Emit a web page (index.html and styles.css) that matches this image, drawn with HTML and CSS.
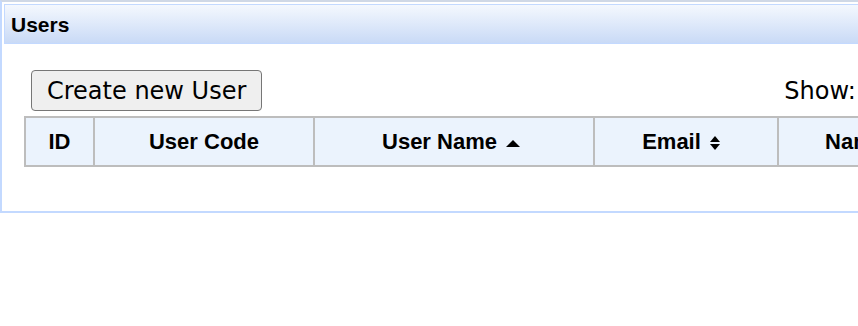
FILE: index.html
```html
<!DOCTYPE html>
<html>
<head>
<meta charset="utf-8">
<link rel="stylesheet" href="styles.css">
</head>
<body>
<div class="panel">
  <div class="panel-head">Users</div>
  <div class="panel-body">
    <div class="toolbar">
      <button class="btn">Create new User</button>
      <span class="show">Show:</span>
    </div>
    <table class="grid">
      <thead>
        <tr>
          <th class="c-id">ID</th>
          <th class="c-code">User Code</th>
          <th class="c-name">User Name<span class="sort"><span class="up big"></span></span></th>
          <th class="c-email">Email<span class="sort"><span class="both"><span class="up"></span><span class="down"></span></span></span></th>
          <th class="c-full">Name</th>
        </tr>
      </thead>
    </table>
  </div>
</div>
</body>
</html>
```
FILE: styles.css
```css
html, body {
  margin: 0;
  padding: 0;
  background: #fff;
  width: 858px;
  overflow: hidden;
}
.panel {
  width: 1000px;
  border: 2px solid #c3d9ff;
  border-top-color: #cfd8e6;
  padding: 2px;
  height: 205px;
  box-sizing: content-box;
}
.panel-head {
  height: 38px;
  border: 1px solid #c3d9ff;
  background: linear-gradient(#f4f8fe, #c9daf6);
  font-family: "Liberation Sans", Arial, sans-serif;
  font-weight: bold;
  font-size: 21px;
  line-height: 39px;
  padding-left: 6px;
  color: #000;
}
.panel-body {
  padding: 26px 0 0 20px;
}
.toolbar {
  display: flex;
  align-items: center;
  height: 41px;
  padding-left: 7px;
}
.btn {
  font-family: "DejaVu Sans", Verdana, sans-serif;
  font-size: 24px;
  height: 41px;
  padding: 0 15px 0 15px;
  background: #efefef;
  border: 1px solid #767676;
  border-radius: 4px;
  color: #000;
  line-height: 1;
}
.show {
  font-family: "DejaVu Sans", Verdana, sans-serif;
  font-size: 24px;
  white-space: nowrap;
  margin-left: 522px;
  margin-top: 1px;
}
.grid {
  margin-top: 5px;
  border-collapse: collapse;
  border: 2px solid #bdbdbd;
  table-layout: fixed;
}
.grid th {
  height: 47px;
  padding: 0;
  background: #ebf3fd;
  border: 2px solid #bdbdbd;
  font-family: "Liberation Sans", Arial, sans-serif;
  font-weight: bold;
  font-size: 22px;
  text-align: center;
  white-space: nowrap;
  color: #000;
}
.c-id { width: 67px; }
.c-code { width: 218px; }
.c-name { width: 278px; }
.c-email { width: 182px; }
.c-full { width: 152px; }
.sort {
  display: inline-block;
  width: 20px;
  margin-left: 9px;
  vertical-align: middle;
  line-height: 0;
}
.sort .up,
.sort .down {
  display: block;
  width: 0;
  height: 0;
  border-left: 5px solid transparent;
  border-right: 5px solid transparent;
}
.sort .up {
  border-bottom: 6px solid #000;
}
.sort .up.big {
  border-left-width: 7px;
  border-right-width: 7px;
  border-bottom-width: 7px;
  margin-top: 1px;
}
.sort .both .up {
  margin-bottom: 2px;
}
.sort .down {
  border-top: 6px solid #000;
}
```
